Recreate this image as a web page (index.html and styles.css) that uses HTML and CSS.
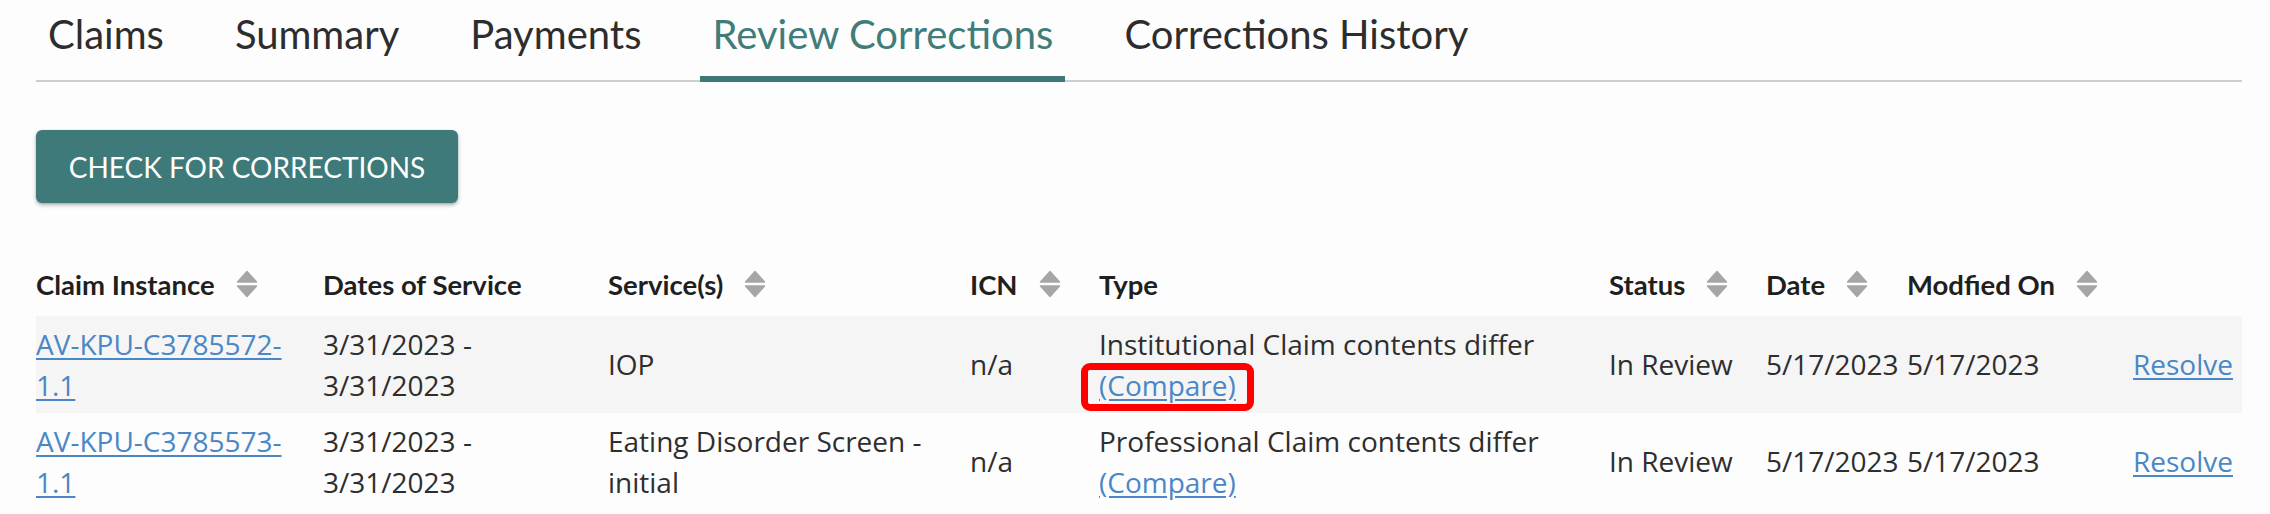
FILE: index.html
```html
<!DOCTYPE html>
<html lang="en">
<head>
<meta charset="utf-8">
<title>Review Corrections</title>
<link rel="stylesheet" href="styles.css">
</head>
<body>
<div class="page">
  <nav class="tabs">
    <a class="tab">Claims</a>
    <a class="tab">Summary</a>
    <a class="tab">Payments</a>
    <a class="tab active">Review Corrections</a>
    <a class="tab">Corrections History</a>
  </nav>

  <button class="btn" type="button">CHECK FOR CORRECTIONS</button>

  <table class="grid">
    <colgroup>
      <col class="c1"><col class="c2"><col class="c3"><col class="c4"><col class="c5"><col class="c6"><col class="c7"><col class="c8"><col class="c9">
    </colgroup>
    <thead>
      <tr>
        <th><span class="th-in">Claim Instance<svg class="sort" viewBox="0 0 22 28"><path d="M11 1.5 L20.5 12 H1.5 Z"/><path d="M1.5 16 H20.5 L11 26.5 Z"/></svg></span></th>
        <th><span class="th-in">Dates of Service</span></th>
        <th><span class="th-in">Service(s)<svg class="sort" viewBox="0 0 22 28"><path d="M11 1.5 L20.5 12 H1.5 Z"/><path d="M1.5 16 H20.5 L11 26.5 Z"/></svg></span></th>
        <th><span class="th-in">ICN<svg class="sort" viewBox="0 0 22 28"><path d="M11 1.5 L20.5 12 H1.5 Z"/><path d="M1.5 16 H20.5 L11 26.5 Z"/></svg></span></th>
        <th><span class="th-in">Type</span></th>
        <th><span class="th-in">Status<svg class="sort" viewBox="0 0 22 28"><path d="M11 1.5 L20.5 12 H1.5 Z"/><path d="M1.5 16 H20.5 L11 26.5 Z"/></svg></span></th>
        <th><span class="th-in">Date<svg class="sort" viewBox="0 0 22 28"><path d="M11 1.5 L20.5 12 H1.5 Z"/><path d="M1.5 16 H20.5 L11 26.5 Z"/></svg></span></th>
        <th><span class="th-in">Modfied On<svg class="sort" viewBox="0 0 22 28"><path d="M11 1.5 L20.5 12 H1.5 Z"/><path d="M1.5 16 H20.5 L11 26.5 Z"/></svg></span></th>
        <th></th>
      </tr>
    </thead>
    <tbody>
      <tr class="shaded">
        <td><a class="link" href="#"><span class="nw">AV-KPU-C3785572-</span><wbr>1.1</a></td>
        <td>3/31/2023 - 3/31/2023</td>
        <td>IOP</td>
        <td>n/a</td>
        <td>Institutional Claim contents differ <a class="link highlight" href="#">(Compare)</a></td>
        <td>In Review</td>
        <td>5/17/2023</td>
        <td>5/17/2023</td>
        <td><a class="link" href="#">Resolve</a></td>
      </tr>
      <tr>
        <td><a class="link" href="#"><span class="nw">AV-KPU-C3785573-</span><wbr>1.1</a></td>
        <td>3/31/2023 - 3/31/2023</td>
        <td>Eating Disorder Screen - initial</td>
        <td>n/a</td>
        <td>Professional Claim contents differ <a class="link" href="#">(Compare)</a></td>
        <td>In Review</td>
        <td>5/17/2023</td>
        <td>5/17/2023</td>
        <td><a class="link" href="#">Resolve</a></td>
      </tr>
    </tbody>
  </table>
</div>
</body>
</html>
```

FILE: styles.css
```css
html, body {
  margin: 0;
  padding: 0;
  background: #fdfdfd;
}

.page {
  padding: 10px 28px 0 36px;
}

/* Tabs */
.tabs {
  display: flex;
  gap: 47px;
  border-bottom: 2px solid #c9d1d0;
}

.tab {
  font-family: Lato, "Open Sans", sans-serif;
  font-size: 40px;
  line-height: 48px;
  color: #2d2d2d;
  padding: 0 12px 18px;
  border-bottom: 6px solid transparent;
  margin-bottom: -2px;
  text-decoration: none;
  white-space: nowrap;
}

.tab.active {
  color: #3f7c7a;
  border-bottom-color: #3f7a78;
}

/* Button */
.btn {
  display: block;
  margin-top: 48px;
  width: 422px;
  height: 73px;
  padding: 0;
  border: none;
  border-radius: 6px;
  background: #3e7a79;
  color: #ffffff;
  font-family: Lato, "Open Sans", sans-serif;
  font-size: 28px;
  line-height: 34px;
  box-shadow: 0 2px 4px rgba(0, 0, 0, 0.28), 0 1px 2px rgba(0, 0, 0, 0.12);
}

/* Table */
.grid {
  margin-top: 57px;
  width: 2206px;
  table-layout: fixed;
  border-collapse: collapse;
  font-family: "Open Sans", sans-serif;
  font-size: 28px;
  color: #2e2e2e;
}

.c1 { width: 287px; }
.c2 { width: 285px; }
.c3 { width: 362px; }
.c4 { width: 129px; }
.c5 { width: 510px; }
.c6 { width: 157px; }
.c7 { width: 141px; }
.c8 { width: 226px; }
.c9 { width: 109px; }

.grid th {
  text-align: left;
  padding: 4px 12px 12px 0;
  font-family: Lato, "Open Sans", sans-serif;
  font-weight: 700;
  font-size: 27.5px;
  color: #1f1f1f;
  white-space: nowrap;
}

.th-in {
  display: flex;
  align-items: center;
  gap: 21px;
  height: 40px;
}

.sort {
  width: 22px;
  height: 28px;
  fill: #a6a6a6;
  flex: none;
}

.sort path {
  stroke: #a6a6a6;
  stroke-width: 1.5;
  stroke-linejoin: round;
}

.grid td {
  padding: 8px 12px 8px 0;
  line-height: 40.5px;
  vertical-align: middle;
  text-align: left;
}

.shaded td {
  background: #f5f5f5;
}

.link {
  color: #4a87c7;
  text-decoration: underline;
  text-underline-offset: 3px;
}

.nw {
  white-space: nowrap;
}

/* Annotation box drawn over the first Compare link */
.highlight {
  position: relative;
}

.highlight::after {
  content: "";
  position: absolute;
  left: -18px;
  right: -18px;
  top: -3px;
  bottom: -7px;
  border: 7px solid #ff0000;
  border-radius: 9px;
  pointer-events: none;
}
```
